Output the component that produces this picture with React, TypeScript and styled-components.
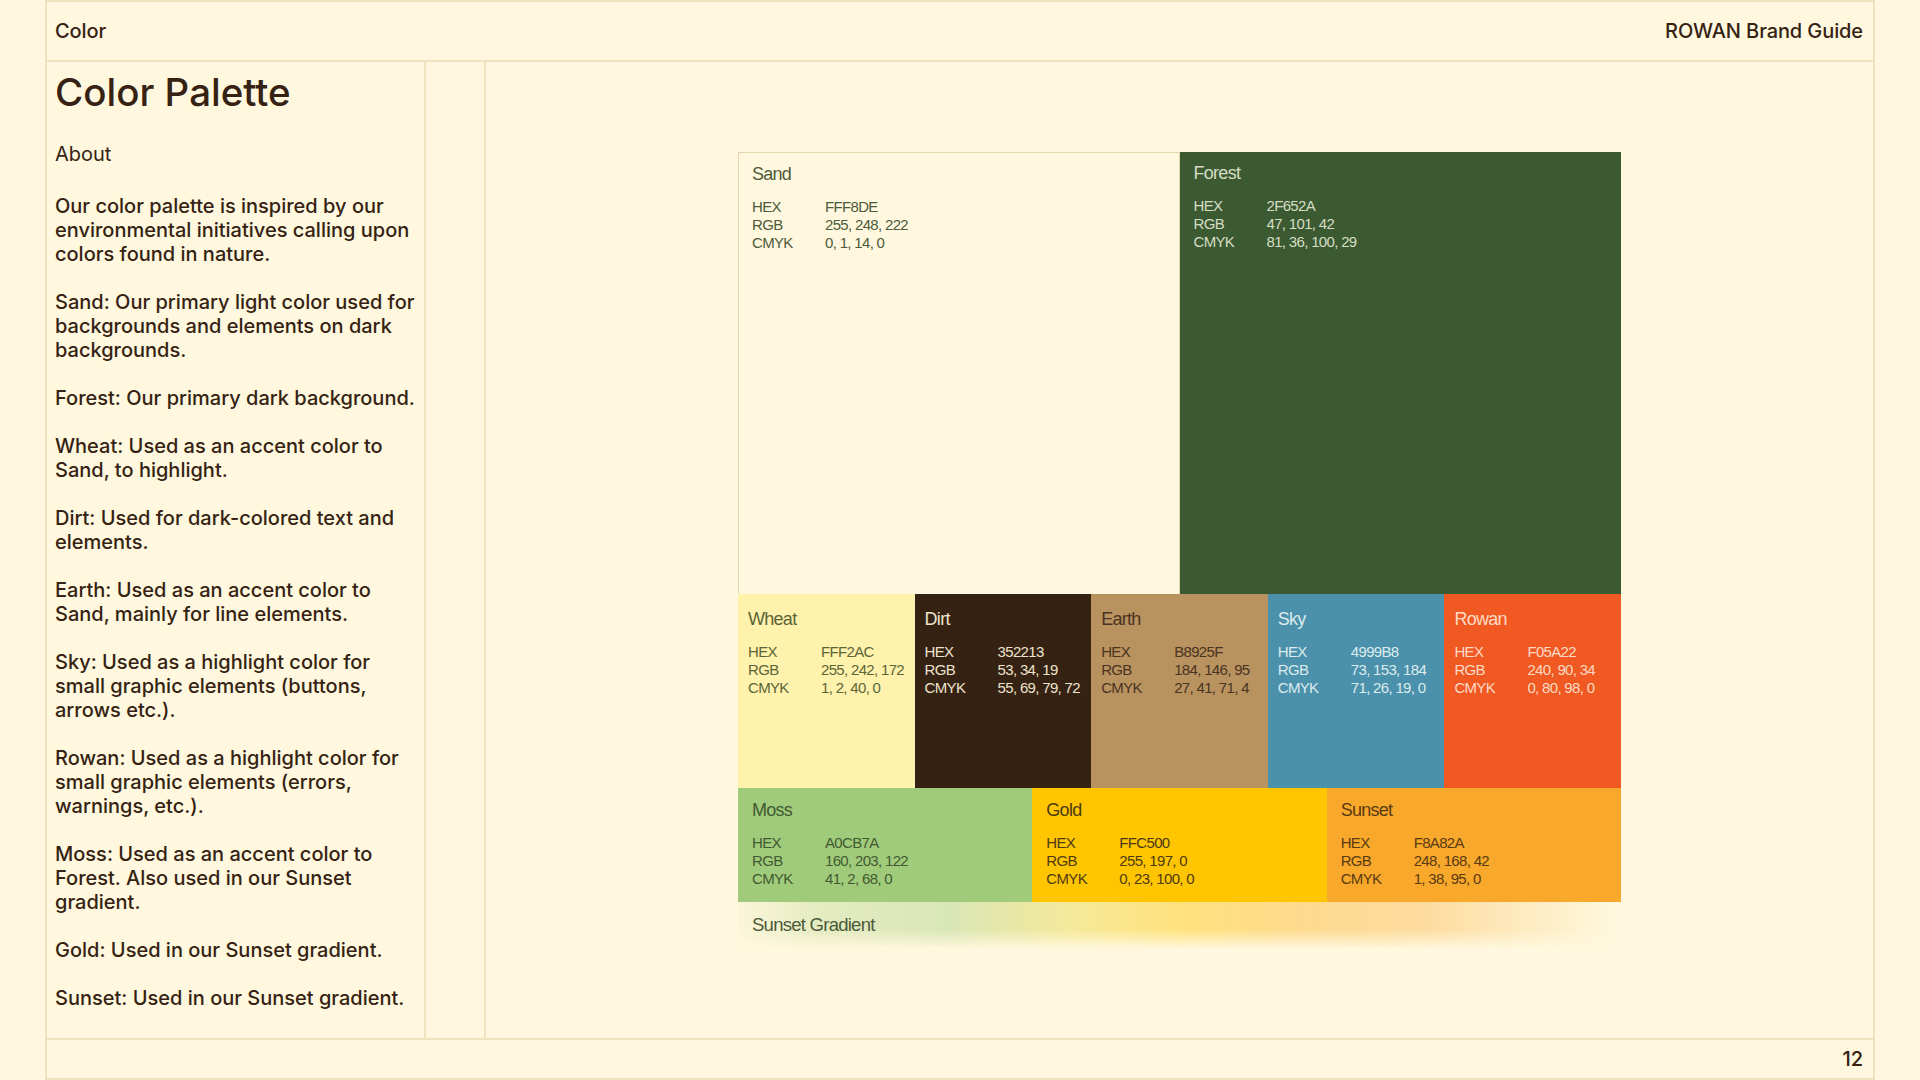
import React from "react";
import styled, { createGlobalStyle } from "styled-components";

type SwatchData = {
  name: string;
  bg: string;
  fg: string;
  hex: string;
  rgb: string;
  cmyk: string;
  bordered?: boolean;
};

const BORDER = "#EEE2BF";

const primary: SwatchData[] = [
  { name: "Sand", bg: "#FFF8DE", fg: "#4D5A3B", hex: "FFF8DE", rgb: "255, 248, 222", cmyk: "0, 1, 14, 0", bordered: true },
  { name: "Forest", bg: "#3B5A32", fg: "#D6DDC3", hex: "2F652A", rgb: "47, 101, 42", cmyk: "81, 36, 100, 29" },
];

const accents: SwatchData[] = [
  { name: "Wheat", bg: "#FFF2AC", fg: "#5B6538", hex: "FFF2AC", rgb: "255, 242, 172", cmyk: "1, 2, 40, 0" },
  { name: "Dirt", bg: "#352213", fg: "#EDE3CC", hex: "352213", rgb: "53, 34, 19", cmyk: "55, 69, 79, 72" },
  { name: "Earth", bg: "#B8925F", fg: "#4A3421", hex: "B8925F", rgb: "184, 146, 95", cmyk: "27, 41, 71, 4" },
  { name: "Sky", bg: "#4B91AB", fg: "#DCEBEE", hex: "4999B8", rgb: "73, 153, 184", cmyk: "71, 26, 19, 0" },
  { name: "Rowan", bg: "#F05A22", fg: "#FCD9C4", hex: "F05A22", rgb: "240, 90, 34", cmyk: "0, 80, 98, 0" },
];

const sunsets: SwatchData[] = [
  { name: "Moss", bg: "#A0CB7A", fg: "#425A32", hex: "A0CB7A", rgb: "160, 203, 122", cmyk: "41, 2, 68, 0" },
  { name: "Gold", bg: "#FFC500", fg: "#4D3A12", hex: "FFC500", rgb: "255, 197, 0", cmyk: "0, 23, 100, 0" },
  { name: "Sunset", bg: "#F8A82A", fg: "#5A3B14", hex: "F8A82A", rgb: "248, 168, 42", cmyk: "1, 38, 95, 0" },
];

const notes = [
  "Our color palette is inspired by our environmental initiatives calling upon colors found in nature.",
  "Sand: Our primary light color used for backgrounds and elements on dark backgrounds.",
  "Forest: Our primary dark background.",
  "Wheat: Used as an accent color to Sand, to highlight.",
  "Dirt: Used for dark-colored text and elements.",
  "Earth: Used as an accent color to Sand, mainly for line elements.",
  "Sky: Used as a highlight color for small graphic elements (buttons, arrows etc.).",
  "Rowan: Used as a highlight color for small graphic elements (errors, warnings, etc.).",
  "Moss: Used as an accent color to Forest. Also used in our Sunset gradient.",
  "Gold: Used in our Sunset gradient.",
  "Sunset: Used in our Sunset gradient.",
];

const Swatch = ({ data, padTop, padLeft }: { data: SwatchData; padTop: number; padLeft: number }) => (
  <SwatchBox $bg={data.bg} $fg={data.fg} $bordered={data.bordered} $padTop={padTop} $padLeft={padLeft}>
    <SwatchName>{data.name}</SwatchName>
    <SpecList>
      <span>HEX</span>
      <span>{data.hex}</span>
      <span>RGB</span>
      <span>{data.rgb}</span>
      <span>CMYK</span>
      <span>{data.cmyk}</span>
    </SpecList>
  </SwatchBox>
);

const App = () => {
  return (
    <>
      <GlobalStyle />
      <Frame>
        <Header>
          <HeaderText>Color</HeaderText>
          <HeaderText>ROWAN Brand Guide</HeaderText>
        </Header>
        <Content>
          <Sidebar>
            <Title>Color Palette</Title>
            <Subtitle>About</Subtitle>
            {notes.map((n) => (
              <Paragraph key={n}>{n}</Paragraph>
            ))}
          </Sidebar>
          <Gutter />
          <Stage>
            <Palette>
              <SwatchRow $height={442} $cols={2}>
                {primary.map((s) => (
                  <Swatch key={s.name} data={s} padTop={10} padLeft={14} />
                ))}
              </SwatchRow>
              <SwatchRow $height={194} $cols={5}>
                {accents.map((s) => (
                  <Swatch key={s.name} data={s} padTop={14} padLeft={10} />
                ))}
              </SwatchRow>
              <SwatchRow $height={114} $cols={3}>
                {sunsets.map((s) => (
                  <Swatch key={s.name} data={s} padTop={11} padLeft={14} />
                ))}
              </SwatchRow>
              <GradientStrip>
                <GradientLabel>Sunset Gradient</GradientLabel>
              </GradientStrip>
            </Palette>
          </Stage>
        </Content>
        <Footer>
          <HeaderText>12</HeaderText>
        </Footer>
      </Frame>
    </>
  );
};

export default App;

const GlobalStyle = createGlobalStyle`
  * {
    box-sizing: border-box;
  }
  html, body {
    margin: 0;
    padding: 0;
    background: #FFF8DE;
  }
  body {
    font-family: Inter, "Noto Sans", sans-serif;
    color: #352213;
  }
`;

const Frame = styled.div`
  width: 1830px;
  height: 1080px;
  margin: 0 auto;
  display: grid;
  grid-template-rows: 60px 1fr 40px;
  border: 2px solid ${BORDER};
`;

const Header = styled.div`
  display: flex;
  align-items: center;
  justify-content: space-between;
  padding: 0 10px 0 8px;
  border-bottom: 2px solid ${BORDER};
`;

const HeaderText = styled.div`
  font-size: 20px;
  font-weight: 500;
  line-height: 24px;
  letter-spacing: -0.005em;
`;

const Content = styled.div`
  display: grid;
  grid-template-columns: 379px 60px 1fr;
  min-height: 0;
`;

const Sidebar = styled.div`
  padding: 6px 7px 0 8px;
  border-right: 2px solid ${BORDER};
`;

const Title = styled.h1`
  margin: 0 0 26px;
  font-size: 38.5px;
  font-weight: 500;
  line-height: 48px;
`;

const Subtitle = styled.div`
  margin-bottom: 28px;
  font-size: 20px;
  font-weight: 400;
  line-height: 24px;
`;

const Paragraph = styled.p`
  margin: 0 0 24px;
  font-size: 20px;
  font-weight: 500;
  line-height: 24px;
`;

const Gutter = styled.div`
  border-right: 2px solid ${BORDER};
`;

const Stage = styled.div`
  display: flex;
  align-items: center;
  justify-content: center;
`;

const Palette = styled.div`
  width: 883px;
  display: flex;
  flex-direction: column;
  font-family: "Liberation Sans", Arial, sans-serif;
`;

const SwatchRow = styled.div<{ $height: number; $cols: number }>`
  height: ${(p) => p.$height}px;
  display: grid;
  grid-template-columns: repeat(${(p) => p.$cols}, 1fr);
`;

const SwatchBox = styled.div<{ $bg: string; $fg: string; $bordered?: boolean; $padTop: number; $padLeft: number }>`
  background: ${(p) => p.$bg};
  color: ${(p) => p.$fg};
  padding: ${(p) => p.$padTop}px 4px 0 ${(p) => p.$padLeft - (p.$bordered ? 1 : 0)}px;
  border: ${(p) => (p.$bordered ? "1px solid #E4D7AE" : "none")};
  border-bottom: none;
  overflow: hidden;
`;

const SwatchName = styled.div`
  font-size: 18px;
  line-height: 22px;
  letter-spacing: -0.04em;
  margin-bottom: 13px;
`;

const SpecList = styled.div`
  display: grid;
  grid-template-columns: 73px auto;
  font-size: 15px;
  line-height: 18px;
  letter-spacing: -0.045em;
  white-space: nowrap;
`;

const GradientStrip = styled.div`
  height: 47px;
  display: flex;
  align-items: center;
  padding-left: 14px;
  position: relative;
  isolation: isolate;
  &::before {
    content: "";
    position: absolute;
    inset: 0;
    z-index: -1;
    background: linear-gradient(
      90deg,
      rgba(160, 203, 122, 0.04) 0%,
      rgba(160, 203, 122, 0.28) 9%,
      rgba(160, 203, 122, 0.4) 24%,
      rgba(235, 215, 70, 0.45) 38%,
      rgba(255, 205, 30, 0.5) 50%,
      rgba(252, 180, 45, 0.45) 64%,
      rgba(248, 168, 42, 0.35) 78%,
      rgba(248, 168, 42, 0.15) 90%,
      rgba(255, 248, 222, 0) 99%
    );
    -webkit-mask-image: linear-gradient(to bottom, #000 0%, #000 58%, transparent 100%);
    mask-image: linear-gradient(to bottom, #000 0%, #000 58%, transparent 100%);
  }
`;

const GradientLabel = styled.div`
  font-size: 18.5px;
  line-height: 22px;
  letter-spacing: -0.04em;
  color: #4D5A3B;
`;

const Footer = styled.div`
  display: flex;
  align-items: center;
  justify-content: flex-end;
  padding: 0 10px;
  border-top: 2px solid ${BORDER};
`;
